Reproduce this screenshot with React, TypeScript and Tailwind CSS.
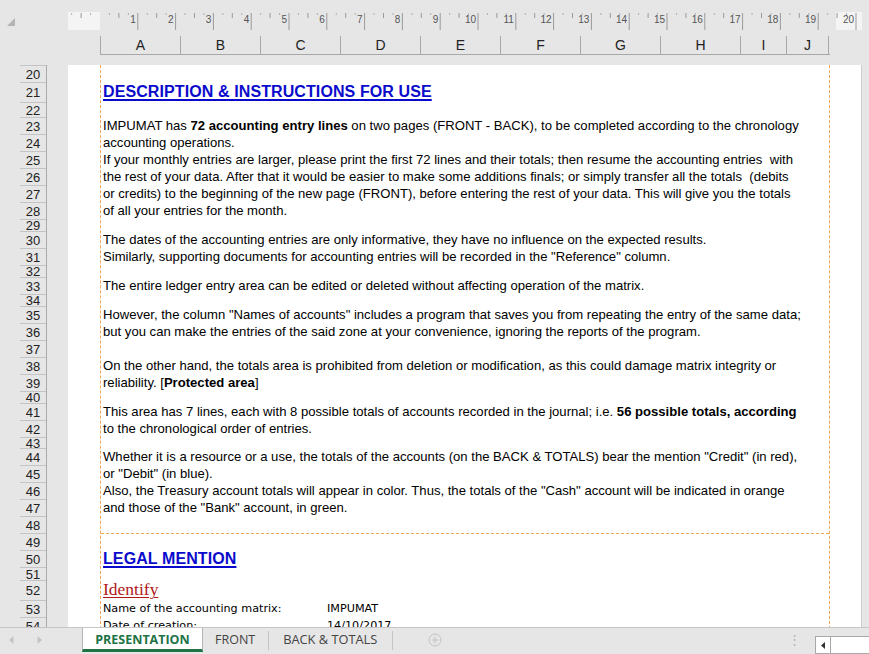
import type { ReactNode } from 'react';

type Row = { n: number; h: number; content?: ReactNode; top?: boolean };

const B = ({ children }: { children: ReactNode }) => <b className="font-bold">{children}</b>;

const Heading = ({ children }: { children: ReactNode }) => (
  <span className="text-[16px] font-bold tracking-[0.1px] text-[#0a0acc] underline decoration-[1.5px] underline-offset-[2px]">
    {children}
  </span>
);

const Pair = ({ label, value }: { label: string; value: string }) => (
  <div className="flex font-['DejaVu_Sans',sans-serif] text-[11.2px]">
    <span className="w-[224px]">{label}</span>
    <span>{value}</span>
  </div>
);

const rows: Row[] = [
  { n: 20, h: 17 },
  { n: 21, h: 20, content: <Heading>DESCRIPTION &amp; INSTRUCTIONS FOR USE</Heading> },
  { n: 22, h: 15 },
  {
    n: 23,
    h: 17,
    content: (
      <>
        IMPUMAT has <B>72 accounting entry lines</B> on two pages (FRONT - BACK), to be completed according to the chronology
      </>
    ),
  },
  { n: 24, h: 17, content: 'accounting operations.' },
  { n: 25, h: 17, content: 'If your monthly entries are larger, please print the first 72 lines and their totals; then resume the accounting entries  with' },
  { n: 26, h: 17, content: 'the rest of your data. After that it would be easier to make some additions finals; or simply transfer all the totals  (debits' },
  { n: 27, h: 17, content: 'or credits) to the beginning of the new page (FRONT), before entering the rest of your data. This will give you the totals' },
  { n: 28, h: 17, content: 'of all your entries for the month.' },
  { n: 29, h: 12 },
  { n: 30, h: 17, content: 'The dates of the accounting entries are only informative, they have no influence on the expected results.' },
  { n: 31, h: 17, content: 'Similarly, supporting documents for accounting entries will be recorded in the "Reference" column.' },
  { n: 32, h: 12 },
  { n: 33, h: 17, content: 'The entire ledger entry area can be edited or deleted without affecting operation of the matrix.' },
  { n: 34, h: 12 },
  { n: 35, h: 17, content: 'However, the column "Names of accounts" includes a program that saves you from repeating the entry of the same data;' },
  { n: 36, h: 17, content: 'but you can make the entries of the said zone at your convenience, ignoring the reports of the program.' },
  { n: 37, h: 17 },
  { n: 38, h: 17, content: 'On the other hand, the totals area is prohibited from deletion or modification, as this could damage matrix integrity or' },
  {
    n: 39,
    h: 17,
    content: (
      <>
        reliability. [<B>Protected area</B>]
      </>
    ),
  },
  { n: 40, h: 12 },
  {
    n: 41,
    h: 17,
    content: (
      <>
        This area has 7 lines, each with 8 possible totals of accounts recorded in the journal; i.e. <B>56 possible totals, according</B>
      </>
    ),
  },
  { n: 42, h: 17, content: 'to the chronological order of entries.' },
  { n: 43, h: 11 },
  { n: 44, h: 17, content: 'Whether it is a resource or a use, the totals of the accounts (on the BACK & TOTALS) bear the mention "Credit" (in red),' },
  { n: 45, h: 17, content: 'or "Debit" (in blue).' },
  { n: 46, h: 17, content: 'Also, the Treasury account totals will appear in color. Thus, the totals of the "Cash" account will be indicated in orange' },
  { n: 47, h: 17, content: 'and those of the "Bank" account, in green.' },
  { n: 48, h: 17 },
  { n: 49, h: 17, top: true },
  { n: 50, h: 17, content: <Heading>LEGAL MENTION</Heading> },
  { n: 51, h: 13 },
  {
    n: 52,
    h: 20,
    content: (
      <span className="font-['Liberation_Serif',serif] text-[17.5px] text-[#b01818] underline decoration-1 underline-offset-[2px]">
        Identify
      </span>
    ),
  },
  { n: 53, h: 17, content: <Pair label="Name of the accounting matrix:" value="IMPUMAT" /> },
  { n: 54, h: 17, content: <Pair label="Date of creation:" value="14/10/2017" /> },
];

const columns = [
  { l: 'A', w: 80 },
  { l: 'B', w: 80 },
  { l: 'C', w: 80 },
  { l: 'D', w: 80 },
  { l: 'E', w: 80 },
  { l: 'F', w: 80 },
  { l: 'G', w: 80 },
  { l: 'H', w: 80 },
  { l: 'I', w: 46 },
  { l: 'J', w: 43 },
];

function Ruler() {
  const cm = 37.8;
  const marks: ReactNode[] = [];
  for (let n = -1; n <= 20; n++) {
    for (let q = 0; q < 4; q++) {
      const x = 32 + (n + q / 4) * cm;
      if (x < 2 || x > 792) continue;
      const key = `${n}-${q}`;
      if (q === 0) {
        if (n < 1) continue;
        marks.push(
          <g key={key}>
            <line x1={x} x2={x} y1={2} y2={19} stroke="#9a9a9a" strokeWidth={1} />
            <text x={x - 2} y={11.5} textAnchor="end" fontSize="10" fill="#555" fontFamily="Liberation Sans, sans-serif">
              {n}
            </text>
          </g>
        );
      } else if (q === 2) {
        marks.push(<line key={key} x1={x} x2={x} y1={2} y2={7} stroke="#9a9a9a" strokeWidth={1} />);
      } else {
        marks.push(<line key={key} x1={x} x2={x} y1={2} y2={4} stroke="#b0b0b0" strokeWidth={1} />);
      }
    }
  }
  return (
    <svg width={794} height={20} viewBox="0 0 794 20">
      <rect x={0} y={1} width={32} height={18} fill="#f4f4f4" />
      <rect x={768} y={1} width={26} height={18} fill="#f4f4f4" />
      {marks}
    </svg>
  );
}

export default function App() {
  return (
    <div className="w-[869px] h-[654px] overflow-hidden bg-[#e6e6e6] flex flex-col font-['Liberation_Sans',Arial,sans-serif] text-black">
      {/* ruler + column headers */}
      <div className="h-[65px] shrink-0 pt-[11px]">
        <div className="flex h-[20px]">
          <div className="w-[68px] pl-[6px] pt-[6px]">
            <svg width="10" height="10" viewBox="0 0 10 10">
              <path d="M9 1 L9 9 L1 9 Z" fill="#b4b4b4" />
            </svg>
          </div>
          <Ruler />
        </div>
        <div className="mt-[5px] ml-[100px] flex h-[19px] w-[730px] border-b border-[#a8a8a8]">
          {columns.map((c, i) => (
            <div
              key={c.l}
              style={{ width: c.w }}
              className={`flex items-center justify-center border-l border-[#a8a8a8] text-[14px] text-[#222] ${
                i === columns.length - 1 ? 'border-r' : ''
              }`}
            >
              {c.l}
            </div>
          ))}
        </div>
      </div>

      {/* rows + page */}
      <div className="flex h-[562px] overflow-hidden">
        <div className="ml-[20px] w-[27px] shrink-0 border-r border-[#ababab]">
          <div className="border-t border-[#c4c4c4]" />
          {rows.map((r) => (
            <div
              key={r.n}
              style={{ height: r.h }}
              className="flex items-center justify-center overflow-hidden border-b border-[#c4c4c4] text-[13px] leading-none text-[#222]"
            >
              {r.n}
            </div>
          ))}
        </div>
        <div className="ml-[21px] w-[794px] shrink-0 bg-white border-r border-[#cfcfcf]">
          <div className="ml-[32px] w-[730px] border-x border-dashed border-[#f0a552]">
            {rows.map((r) => (
              <div
                key={r.n}
                style={{ height: r.h }}
                className={`flex items-center whitespace-pre pl-[2px] text-[13.1px] leading-none ${
                  r.top ? 'border-t border-dashed border-[#f0a552]' : ''
                }`}
              >
                {r.content}
              </div>
            ))}
          </div>
        </div>
      </div>

      {/* sheet tabs */}
      <div className="flex h-[27px] shrink-0 items-start border-t border-[#c6c6c6] font-['Open_Sans',sans-serif] text-[12.5px] text-[#444]">
        <div className="flex h-[24px] w-[82px] items-center">
          <svg className="ml-[9px]" width="5" height="8" viewBox="0 0 5 8">
            <path d="M4.5 0 L0 4 L4.5 8 Z" fill="#c4c4c4" />
          </svg>
          <svg className="ml-[23px]" width="5" height="8" viewBox="0 0 5 8">
            <path d="M0.5 0 L5 4 L0.5 8 Z" fill="#c4c4c4" />
          </svg>
        </div>
        <div className="flex h-[24px] w-[121px] items-center justify-center border-x border-b-[3px] border-x-[#b4b4b4] border-b-[#217346] bg-white pt-[3px] font-bold text-[12.5px] text-[#217346]">
          PRESENTATION
        </div>
        <div className="flex h-[24px] items-center pl-[12px] pr-[13px]">FRONT</div>
        <div className="mt-[3px] h-[19px] w-px bg-[#c4c4c4]" />
        <div className="flex h-[24px] items-center pl-[14px] pr-[15px] text-[12.8px]">BACK &amp; TOTALS</div>
        <div className="mt-[3px] h-[19px] w-px bg-[#c4c4c4]" />
        <div className="flex h-[24px] items-center pl-[35px]">
          <svg width="14" height="14" viewBox="0 0 14 14">
            <circle cx="7" cy="7" r="6" fill="none" stroke="#c4c4c4" strokeWidth="1" />
            <path d="M7 3.5 V10.5 M3.5 7 H10.5" stroke="#c4c4c4" strokeWidth="1" />
          </svg>
        </div>
        <div className="flex-1" />
        <div className="flex h-[24px] items-center pr-[14px] text-[#b4b4b4] leading-none">⋮</div>
        <div className="mt-[8px] flex h-[18px] items-stretch">
          <div className="flex w-[16px] items-center justify-center border border-[#a8a8a8] bg-white">
            <svg width="4" height="7" viewBox="0 0 4 7">
              <path d="M4 0 L0 3.5 L4 7 Z" fill="#333" />
            </svg>
          </div>
          <div className="w-[38px] border-y border-[#a8a8a8] bg-white" />
        </div>
      </div>
    </div>
  );
}
